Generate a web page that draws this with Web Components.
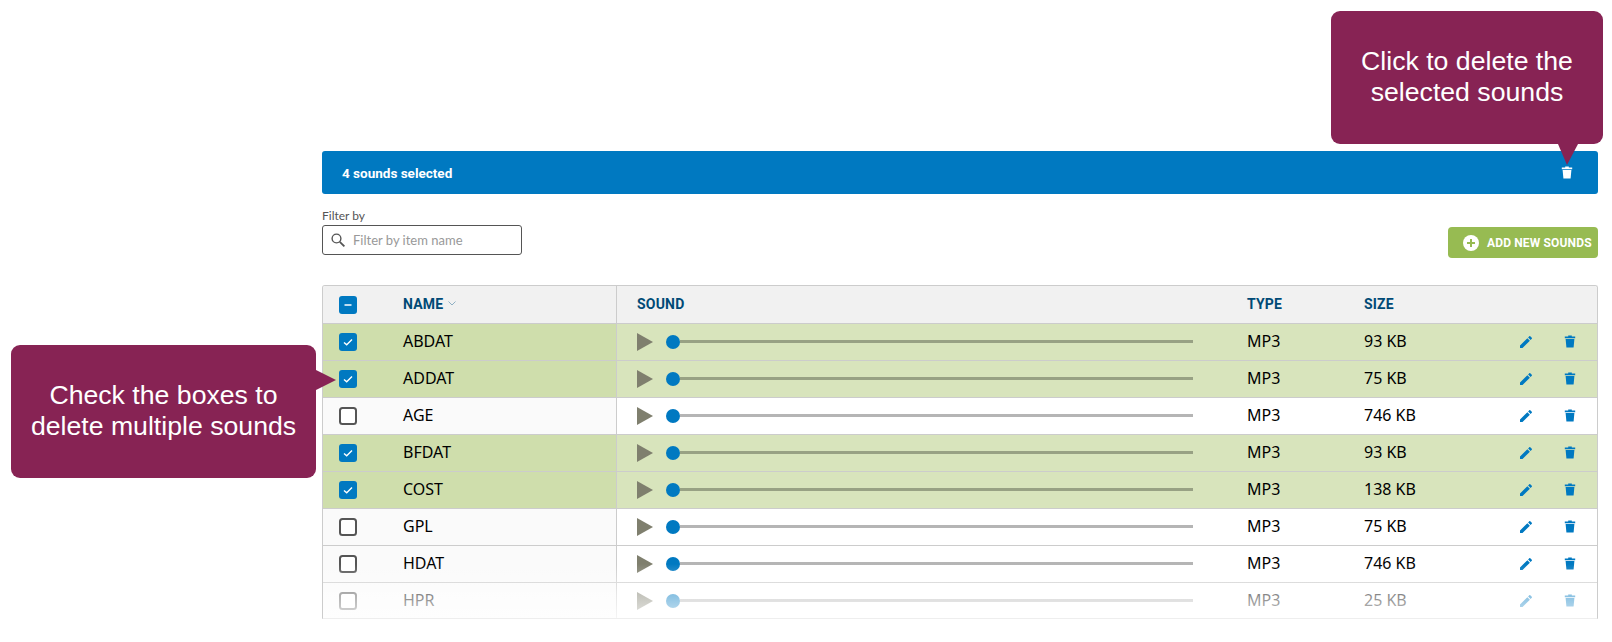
<!DOCTYPE html>
<html lang="en">
<head>
<meta charset="utf-8">
<title>Sounds</title>
<style>
    html, body { margin: 0; background: #fff; }
    body { width: 1612px; height: 642px; overflow: hidden; position: relative; font-family: "Noto Sans", sans-serif; }
</style>
</head>
<body>
<sound-page>
    <callout-box slot="callouts" side="bottom" style="left:1331px;top:11px;width:272px;height:133px">Click to delete the<br>selected sounds</callout-box>
    <callout-box slot="callouts" side="right" style="left:11px;top:345px;width:305px;height:133px">Check the boxes to<br>delete multiple sounds</callout-box>
    <selection-bar count="4"></selection-bar>
    <sound-toolbar></sound-toolbar>
    <sound-table>
        <sound-row name="ABDAT" size="93 KB" selected></sound-row>
        <sound-row name="ADDAT" size="75 KB" selected></sound-row>
        <sound-row name="AGE" size="746 KB"></sound-row>
        <sound-row name="BFDAT" size="93 KB" selected></sound-row>
        <sound-row name="COST" size="138 KB" selected></sound-row>
        <sound-row name="GPL" size="75 KB"></sound-row>
        <sound-row name="HDAT" size="746 KB"></sound-row>
        <sound-row name="HPR" size="25 KB"></sound-row>
    </sound-table>
</sound-page>

<script>
const TRASH = `<svg viewBox="0 0 12 13" width="12" height="13" fill="currentColor"><path d="M0.8 1.6H4.2V0.4H7.8V1.6H11.2V3.2H0.8Z"/><path d="M1.6 4H10.4L9.6 12.6H2.4Z"/></svg>`;
const PENCIL = `<svg viewBox="0 0 24 24" width="16" height="16" fill="currentColor"><path d="M3 17.25V21h3.75L17.81 9.94l-3.75-3.75L3 17.25zM20.71 7.04c.39-.39.39-1.02 0-1.41l-2.34-2.34c-.39-.39-1.02-.39-1.41 0l-1.83 1.83 3.75 3.75 1.83-1.83z"/></svg>`;

class SoundPage extends HTMLElement {
    constructor() {
        super();
        this.attachShadow({ mode: 'open' });
        this.shadowRoot.innerHTML = `
            <style>
                :host { display: block; padding: 151px 14px 0 322px; }
            </style>
            <slot name="callouts"></slot>
            <slot></slot>
        `;
    }
}

class CalloutBox extends HTMLElement {
    constructor() {
        super();
        this.attachShadow({ mode: 'open' });
        this.shadowRoot.innerHTML = `
            <style>
                :host {
                    display: flex;
                    position: absolute;
                    z-index: 5;
                    box-sizing: border-box;
                    align-items: center;
                    justify-content: center;
                    background: #872354;
                    border-radius: 9px;
                    color: #fff;
                    font: 26.67px/31px "Liberation Sans", Arial, sans-serif;
                    text-align: center;
                }
                .tip { position: absolute; fill: #872354; }
                :host([side="bottom"]) .tip { left: 227px; top: 133px; }
                :host([side="right"]) .tip { left: 305px; top: 25px; }
                .text { margin-top: -1px; }
            </style>
            <div class="text"><slot></slot></div>
            ${this.getAttribute('side') === 'bottom'
                ? '<svg class="tip" width="20" height="21"><path d="M0 0H20L9 21Z"/></svg>'
                : '<svg class="tip" width="20" height="20"><path d="M0 0L20 10L0 20Z"/></svg>'}
        `;
    }
}

class SelectionBar extends HTMLElement {
    constructor() {
        super();
        this.attachShadow({ mode: 'open' });
        this.shadowRoot.innerHTML = `
            <style>
                :host {
                    display: flex;
                    height: 43px;
                    box-sizing: border-box;
                    align-items: center;
                    justify-content: space-between;
                    padding: 0 25px 0 20px;
                    background: #0079c1;
                    border-radius: 3px;
                    color: #fff;
                    font: 700 13.5px Roboto, sans-serif;
                }
                svg { display: block; }
            </style>
            <span>${this.getAttribute('count')} sounds selected</span>
            ${TRASH}
        `;
    }
}

class SoundToolbar extends HTMLElement {
    constructor() {
        super();
        this.attachShadow({ mode: 'open' });
        this.shadowRoot.innerHTML = `
            <style>
                :host {
                    display: flex;
                    justify-content: space-between;
                    align-items: flex-end;
                    padding-top: 15px;
                    margin-bottom: 27px;
                    height: 49px;
                }
                label { display: block; color: #555; font: 12px/16px Lato, sans-serif; margin-top: -1px; margin-bottom: 1px; }
                .filter {
                    display: flex;
                    align-items: center;
                    gap: 8px;
                    box-sizing: border-box;
                    width: 200px;
                    height: 30px;
                    margin-bottom: 3px;
                    padding-left: 8px;
                    border: 1px solid #555;
                    border-radius: 3px;
                    color: #999;
                    font: 13px Lato, sans-serif;
                }
                svg { display: block; }
                button {
                    display: flex;
                    align-items: center;
                    gap: 8px;
                    box-sizing: border-box;
                    width: 150px;
                    height: 31px;
                    padding: 0 0 0 15px;
                    border: 0;
                    border-radius: 4px;
                    background: #97bb52;
                    color: #fff;
                    font: 700 12px Roboto, sans-serif;
                    letter-spacing: .15px;
                    white-space: nowrap;
                }
            </style>
            <div>
                <label>Filter by</label>
                <div class="filter">
                    <svg viewBox="0 0 14 14" width="14" height="14" fill="none" stroke="#555" stroke-width="1.4"><circle cx="5.5" cy="5.5" r="4.4"/><path d="M8.8 8.8L13.4 13.4" stroke-width="1.8"/></svg>
                    <span>Filter by item name</span>
                </div>
            </div>
            <button>
                <svg viewBox="0 0 16 16" width="16" height="16"><circle cx="8" cy="8" r="8" fill="#fff"/><path d="M8 4V12M4 8H12" stroke="#97bb52" stroke-width="2"/></svg>
                ADD NEW SOUNDS
            </button>
        `;
    }
}

class CheckMark extends HTMLElement {
    constructor() {
        super();
        this.attachShadow({ mode: 'open' });
        const state = this.getAttribute('state');
        let inner = '';
        if (state === 'on') inner = '<path d="M5 9.4L7.7 11.8L13 6.6" fill="none" stroke="#fff" stroke-width="1.4"/>';
        if (state === 'mixed') inner = '<path d="M5.5 9H12.5" stroke="#fff" stroke-width="1.6"/>';
        this.shadowRoot.innerHTML = `
            <style>
                :host { display: block; width: 18px; height: 18px; }
                svg { display: block; }
            </style>
            <svg width="18" height="18" viewBox="0 0 18 18">
                ${state ? '<rect width="18" height="18" rx="3" fill="#0079c1"/>'
                        : '<rect x="1" y="1" width="16" height="16" rx="2.5" fill="#fff" stroke="#555" stroke-width="2"/>'}
                ${inner}
            </svg>
        `;
    }
}

const ROW_COLUMNS = '293px 631px 117px 146px 1fr';

class SoundTable extends HTMLElement {
    constructor() {
        super();
        this.attachShadow({ mode: 'open' });
        this.shadowRoot.innerHTML = `
            <style>
                :host {
                    display: block;
                    position: relative;
                    height: 334px;
                    box-sizing: border-box;
                    border: 1px solid #ccc;
                    border-bottom-color: #eee;
                    border-radius: 3px 3px 0 0;
                    overflow: hidden;
                }
                .head {
                    display: grid;
                    grid-template-columns: ${ROW_COLUMNS};
                    height: 38px;
                    box-sizing: border-box;
                    border-bottom: 1px solid #ccc;
                    background: #f1f1f1;
                    color: #004a76;
                    font: 700 14px Roboto, sans-serif;
                    letter-spacing: .2px;
                }
                .head > div { display: flex; align-items: center; padding-bottom: 2px; }
                .head > .first { padding-bottom: 0; }
                .first { gap: 46px; padding-left: 16px; }
                .sound { padding-left: 20px; border-left: 1px solid #ccc; }
                .name { display: flex; align-items: center; gap: 5px; margin-bottom: 2px; }
                .fade {
                    position: absolute;
                    left: 0; right: 0; bottom: 0;
                    height: 54px;
                    background: linear-gradient(rgba(255,255,255,0), rgba(255,255,255,.52) 55%, rgba(255,255,255,.8));
                }
            </style>
            <div class="head">
                <div class="first"><check-mark state="mixed"></check-mark><span class="name">NAME <svg width="8" height="5" fill="none" stroke="#8fb0c4"><path d="M.5.5L4 4L7.5.5"/></svg></span></div>
                <div class="sound">SOUND</div>
                <div>TYPE</div>
                <div>SIZE</div>
                <div></div>
            </div>
            <slot></slot>
            <div class="fade"></div>
        `;
    }
}

class SoundRow extends HTMLElement {
    constructor() {
        super();
        this.attachShadow({ mode: 'open' });
        const selected = this.hasAttribute('selected');
        this.shadowRoot.innerHTML = `
            <style>
                :host {
                    display: grid;
                    grid-template-columns: ${ROW_COLUMNS};
                    height: 37px;
                    box-sizing: border-box;
                    border-bottom: 1px solid #ccc;
                    background: #fff;
                    color: #000;
                    font: 16px "Noto Sans", sans-serif;
                    --track: #b5b5b5;
                }
                :host([selected]) { background: #d8e4bc; --track: #98a184; }
                .first { display: flex; align-items: center; gap: 46px; padding-left: 16px; background: #fafafa; }
                :host([selected]) .first { background: #cfdeac; }
                .first span, .cell { padding-bottom: 2px; }
                .sound { display: flex; align-items: center; padding: 0 0 1px 20px; border-left: 1px solid #ccc; }
                .cell { display: flex; align-items: center; }
                .play { width: 0; height: 0; border-left: 16px solid #7f7f6e; border-top: 9.5px solid transparent; border-bottom: 9.5px solid transparent; }
                .thumb { width: 14px; height: 14px; margin-left: 13px; border-radius: 50%; background: #0079c1; flex: none; }
                .track { width: 513px; height: 3px; background: var(--track); }
                .actions { display: flex; align-items: center; gap: 30px; padding: 0 0 1px 8px; color: #0079c1; }
                svg { display: block; }
            </style>
            <div class="first"><check-mark ${selected ? 'state="on"' : ''}></check-mark><span>${this.getAttribute('name')}</span></div>
            <div class="sound"><span class="play"></span><span class="thumb"></span><span class="track"></span></div>
            <div class="cell">MP3</div>
            <div class="cell">${this.getAttribute('size')}</div>
            <div class="actions">${PENCIL}${TRASH}</div>
        `;
    }
}

customElements.define('sound-page', SoundPage);
customElements.define('callout-box', CalloutBox);
customElements.define('selection-bar', SelectionBar);
customElements.define('sound-toolbar', SoundToolbar);
customElements.define('check-mark', CheckMark);
customElements.define('sound-table', SoundTable);
customElements.define('sound-row', SoundRow);
</script>
</body>
</html>
